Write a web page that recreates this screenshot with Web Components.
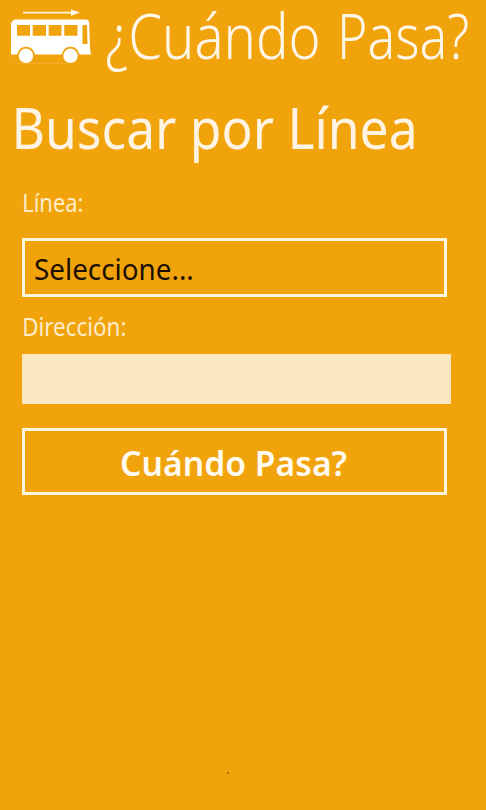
<!DOCTYPE html>
<html lang="es">
<head>
<meta charset="utf-8">
<title>¿Cuándo Pasa?</title>
<style>
html,body{margin:0;height:100%;background:#f1a30b}
body{overflow:hidden;font-family:"Noto Sans","Open Sans",sans-serif}
</style>
</head>
<body>
<bus-app></bus-app>
<script>
// One line of text whose inked width is given by the "width" attribute.
class FitText extends HTMLElement{
  connectedCallback(){
    const root=this.attachShadow({mode:'open'});
    root.innerHTML=`<style>:host{display:block;line-height:1;white-space:pre}
      span{display:block;width:100%;transform-origin:0 0}</style><span><slot></slot></span>`;
    const s=getComputedStyle(this),c=document.createElement('canvas').getContext('2d');
    c.font=`${s.fontWeight} ${s.fontSize} ${s.fontFamily}`;
    const m=c.measureText(this.textContent),k=this.getAttribute('width')/(m.actualBoundingBoxRight+m.actualBoundingBoxLeft);
    root.querySelector('span').style.transform=`translateX(${m.actualBoundingBoxLeft*k}px) scaleX(${k})`;
    this.style.width=this.getAttribute('width')+'px';
  }
}
customElements.define('fit-text',FitText);

class BusIcon extends HTMLElement{
  connectedCallback(){
    this.attachShadow({mode:'open'}).innerHTML=`<style>:host{display:block;width:107px;height:72px}svg{display:block}</style>
    <svg width="107" height="72" viewBox="0 0 107 72">
      <path d="M23 12.6H72" stroke="#fff3da" stroke-width="1.6"/>
      <path d="M71 9.5 80 12.6 71 15.8Z" fill="#fffaf0"/>
      <path d="M12 63.5H68" stroke="#f4b03a" stroke-width=".7"/>
      <path fill="#fff" fill-rule="evenodd" d="M15 19.5H86Q89 19.5 89.2 23L90 49 91 54.5H79.5C78 49.5 75 46.8 70.5 46.8S63 49.5 61.8 54.5H35C33.5 49.5 30.5 46.8 26 46.8S18.5 49.5 17.3 54.5H11V25Q11.2 20.5 15 19.5ZM17 25V35.8H30V25ZM32.7 25V35.8H46V25ZM48.7 25V35.8H61.5V25ZM64.3 25V35.8H77.5V25ZM82.5 25V44H87.5L87 25Z"/>
      <circle cx="26" cy="55.8" r="7.2" fill="#fff"/><circle cx="70.5" cy="55.8" r="7.2" fill="#fff"/>
    </svg>`;
  }
}
customElements.define('bus-icon',BusIcon);

class OutlineBox extends HTMLElement{
  connectedCallback(){
    this.attachShadow({mode:'open'}).innerHTML=`<style>:host{display:flex;box-sizing:border-box;width:425px;border:3px solid #fff6df;align-items:flex-start}</style><slot></slot>`;
  }
}
customElements.define('outline-box',OutlineBox);

class BusApp extends HTMLElement{
  connectedCallback(){
    this.attachShadow({mode:'open'}).innerHTML=`<style>
      :host{display:flex;flex-direction:column;height:810px;color:#fff3e3}
      header{display:flex;height:99px;gap:24px}
      header bus-icon{margin-right:-24px}
      header fit-text{font-size:62.5px;font-weight:300;color:#fff6ea;padding-top:4px}
      .heading{font-size:56px;padding-left:16px;height:91px}
      main{display:flex;flex-direction:column;padding-left:22px}
      .label{font-size:24.5px;color:#fdebc9;padding-left:2px}
      .l1{height:47px;padding-top:1px}.l2{height:38px;padding-top:18px}
      .select{height:59px;font-size:29.5px;color:#1d1002;padding:13px 0 0 9.5px}
      .input{width:429px;height:50px;background:#fbe7c1;margin-bottom:24px;margin-top:1px}
      .button{height:67px;font-size:35px;font-weight:600;color:#fffaf0;padding:14px 0 0 97px}
      footer{margin-top:auto;height:38px;padding-left:227px}
      footer i{display:block;width:2px;height:2px;background:#a96d04}
    </style>
    <header><bus-icon></bus-icon><fit-text width="211">¿Cuándo</fit-text><fit-text width="126">Pasa?</fit-text></header>
    <fit-text class="heading" width="397.5">Buscar por Línea</fit-text>
    <main>
      <fit-text class="label l1" width="58">Línea:</fit-text>
      <outline-box class="select"><fit-text width="157">Seleccione...</fit-text></outline-box>
      <fit-text class="label l2" width="101">Dirección:</fit-text>
      <div class="input"></div>
      <outline-box class="button"><fit-text width="225">Cuándo Pasa?</fit-text></outline-box>
    </main>
    <footer><i></i></footer>`;
  }
}
customElements.define('bus-app',BusApp);
</script>
</body>
</html>
